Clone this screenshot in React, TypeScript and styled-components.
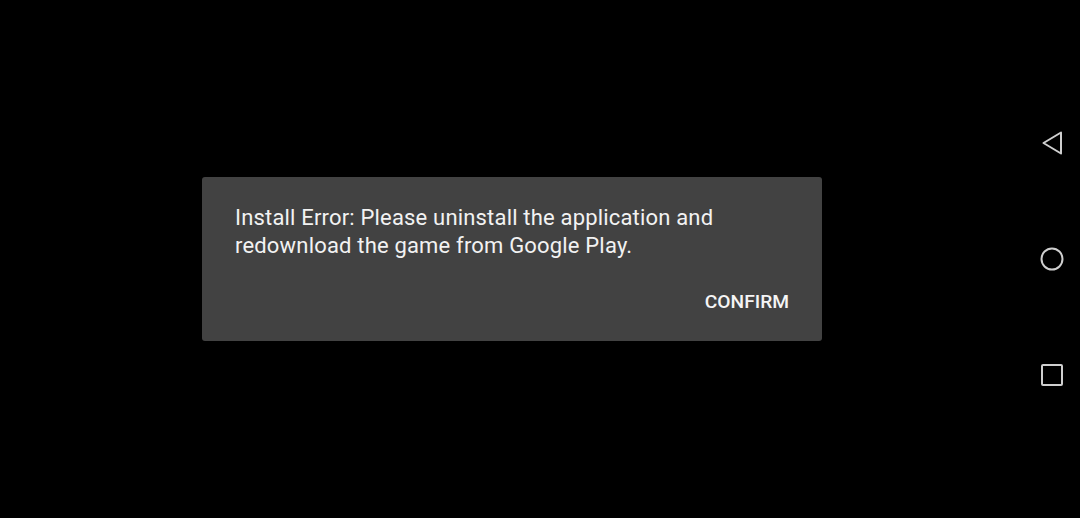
import React from "react";
import styled, { createGlobalStyle } from "styled-components";

const Global = createGlobalStyle`
  html, body { margin: 0; padding: 0; background: #000; }
  body { font-family: Roboto, "Noto Sans", sans-serif; }
`;

const Screen = styled.div`
  display: flex;
  width: 1080px;
  height: 518px;
  background: #000;
  overflow: hidden;
`;

const Stage = styled.div`
  flex: 1;
  display: flex;
  align-items: center;
  justify-content: center;
`;

const Dialog = styled.div`
  width: 620px;
  height: 164px;
  box-sizing: border-box;
  background: #424242;
  border-radius: 3px;
  padding: 27px 33px 0 33px;
  display: flex;
  flex-direction: column;
`;

const Message = styled.p`
  margin: 0;
  color: #f2f2f2;
  font-size: 22px;
  line-height: 28px;
  letter-spacing: 0.18px;
  font-weight: 400;
`;

const Actions = styled.div`
  display: flex;
  justify-content: flex-end;
  margin-top: 31px;
`;

const ActionButton = styled.button`
  background: none;
  border: none;
  padding: 0;
  color: #f5f5f5;
  font-family: Roboto, "Noto Sans", sans-serif;
  font-weight: 500;
  font-size: 19.2px;
  line-height: 22px;
  cursor: pointer;
`;

const NavBar = styled.div`
  width: 56px;
  display: flex;
  flex-direction: column;
  align-items: center;
  justify-content: center;
  gap: 92px;
`;

const NavIcon = styled.svg`
  display: block;
  width: 24px;
  height: 24px;
  color: #cfcfcf;
`;

export default function App() {
  return (
    <>
      <Global />
      <Screen>
        <Stage>
          <Dialog>
            <Message>
              Install Error: Please uninstall the application and
              <br />
              redownload the game from Google Play.
            </Message>
            <Actions>
              <ActionButton>CONFIRM</ActionButton>
            </Actions>
          </Dialog>
        </Stage>
        <NavBar>
          <NavIcon viewBox="0 0 24 24" fill="none" stroke="currentColor" strokeWidth="2" strokeLinejoin="round">
            <path d="M21 1.5 L3.5 12 L21 22.5 Z" />
          </NavIcon>
          <NavIcon viewBox="0 0 24 24" fill="none" stroke="currentColor" strokeWidth="2">
            <circle cx="12" cy="12" r="10.5" />
          </NavIcon>
          <NavIcon viewBox="0 0 24 24" fill="none" stroke="currentColor" strokeWidth="2">
            <rect x="2" y="2" width="20" height="20" rx="1" />
          </NavIcon>
        </NavBar>
      </Screen>
    </>
  );
}
